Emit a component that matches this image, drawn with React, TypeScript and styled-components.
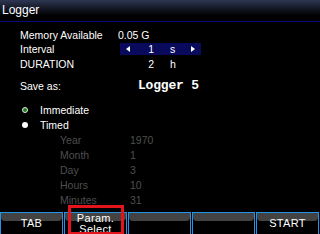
import React from "react";
import styled, { createGlobalStyle } from "styled-components";

const GlobalStyle = createGlobalStyle`
  html, body {
    margin: 0;
    padding: 0;
    background: #000;
  }
  body {
    font-family: "Liberation Sans", Arial, sans-serif;
    color: #fff;
  }
`;

const Screen = styled.div`
  width: 320px;
  height: 234px;
  background: #000;
  display: flex;
  flex-direction: column;
  overflow: hidden;
  font-size: 10.5px;
`;

const TitleBar = styled.div`
  height: 22px;
  box-sizing: border-box;
  padding: 4px 0 0 2px;
  font-size: 12px;
  line-height: 13px;
  background: linear-gradient(to bottom, #2e3752 0px, #0d0f18 11px, #000 16px);
  border-bottom: 1px solid #0a0a80;
`;

const Body = styled.div`
  flex: 1;
  display: flex;
  flex-direction: column;
  padding: 5.5px 0 0 20px;
`;

const InfoRow = styled.div`
  display: grid;
  grid-template-columns: 100px 81px;
  height: 14.5px;
  line-height: 14.5px;
`;

const ValueCell = styled.div<{ $active?: boolean }>`
  display: grid;
  grid-template-columns: 10px 24px 14px 1fr 10px;
  align-items: center;
  height: 12px;
  line-height: 12px;
  margin-top: 1px;
  background: ${(p) => (p.$active ? "#0a0a5c" : "transparent")};
`;

const Num = styled.span<{ $col?: number }>`
  grid-column: ${(p) => p.$col ?? "auto"};
  text-align: right;
`;

const Unit = styled.span`
  grid-column: 4;
  padding-left: 2px;
`;

const Arrow = styled.span<{ $dir: "left" | "right" }>`
  grid-column: ${(p) => (p.$dir === "left" ? 1 : 5)};
  justify-self: ${(p) => (p.$dir === "left" ? "end" : "start")};
  width: 0;
  height: 0;
  border-top: 3.5px solid transparent;
  border-bottom: 3.5px solid transparent;
  ${(p) =>
    p.$dir === "left"
      ? "border-right: 4px solid #fff;"
      : "border-left: 4px solid #fff;"}
`;

const PlainValue = styled.div`
  margin-left: -2px;
`;

const SaveRow = styled.div`
  display: grid;
  grid-template-columns: 118px auto;
  height: 14.5px;
  line-height: 14.5px;
  margin-top: 7.5px;
`;

const FileName = styled.span`
  font-family: "Liberation Mono", "Courier New", monospace;
  font-weight: bold;
  font-size: 13px;
  letter-spacing: -0.2px;
`;

const RadioRow = styled.div<{ $first?: boolean }>`
  display: flex;
  align-items: center;
  height: 15px;
  margin-top: ${(p) => (p.$first ? "9.5px" : "0")};
  padding-left: 2px;
`;

const Dot = styled.span<{ $selected?: boolean }>`
  width: 6px;
  height: 6px;
  border-radius: 50%;
  box-sizing: border-box;
  background: ${(p) => (p.$selected ? "#1a7f1a" : "#fff")};
  border: ${(p) => (p.$selected ? "1.5px solid #e8e8e8" : "none")};
  margin-right: 12px;
`;

const TimeRow = styled.div`
  display: grid;
  grid-template-columns: 70px auto;
  height: 15px;
  line-height: 15px;
  padding-left: 40px;
  color: #4e4e4e;
`;

const SoftKeys = styled.div`
  display: grid;
  grid-template-columns: repeat(5, 63px);
  column-gap: 1px;
  height: 22px;
`;

const Key = styled.div`
  position: relative;
  box-sizing: border-box;
  border: 1px solid #2493e6;
  border-bottom: none;
  display: flex;
  flex-direction: column;
  align-items: center;
  justify-content: center;
  font-size: 11px;
  line-height: 10.5px;
  &::before {
    content: "";
    position: absolute;
    top: 0;
    left: 0;
    right: 0;
    height: 8px;
    background: #434343;
    border-radius: 0 0 4px 4px;
  }
`;

const KeyLabel = styled.span`
  position: relative;
  letter-spacing: 0.3px;
`;

const Highlight = styled.div`
  position: absolute;
  left: 3px;
  top: -8px;
  width: 56px;
  height: 30px;
  box-sizing: border-box;
  border: 3px solid #e3141c;
`;

const times: [string, string][] = [
  ["Year", "1970"],
  ["Month", "1"],
  ["Day", "3"],
  ["Hours", "10"],
  ["Minutes", "31"],
];

export default function App() {
  return (
    <>
      <GlobalStyle />
      <Screen>
        <TitleBar>Logger</TitleBar>
        <Body>
          <InfoRow>
            <span>Memory Available</span>
            <PlainValue>0.05 G</PlainValue>
          </InfoRow>
          <InfoRow>
            <span>Interval</span>
            <ValueCell $active>
              <Arrow $dir="left" />
              <Num>1</Num>
              <Unit>s</Unit>
              <Arrow $dir="right" />
            </ValueCell>
          </InfoRow>
          <InfoRow>
            <span>DURATION</span>
            <ValueCell>
              <Num $col={2}>2</Num>
              <Unit>h</Unit>
            </ValueCell>
          </InfoRow>
          <SaveRow>
            <span>Save as:</span>
            <FileName>Logger 5</FileName>
          </SaveRow>
          <RadioRow $first>
            <Dot $selected />
            Immediate
          </RadioRow>
          <RadioRow>
            <Dot />
            Timed
          </RadioRow>
          {times.map(([label, value]) => (
            <TimeRow key={label}>
              <span>{label}</span>
              <span>{value}</span>
            </TimeRow>
          ))}
        </Body>
        <SoftKeys>
          <Key>
            <KeyLabel>TAB</KeyLabel>
          </Key>
          <Key>
            <KeyLabel>Param.</KeyLabel>
            <KeyLabel>Select</KeyLabel>
            <Highlight />
          </Key>
          <Key />
          <Key />
          <Key>
            <KeyLabel>START</KeyLabel>
          </Key>
        </SoftKeys>
      </Screen>
    </>
  );
}
